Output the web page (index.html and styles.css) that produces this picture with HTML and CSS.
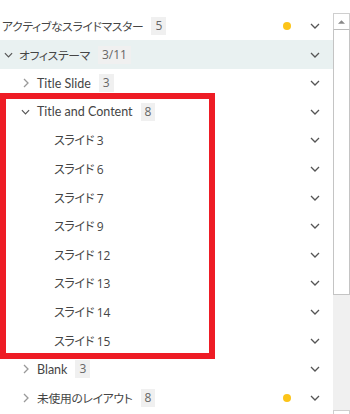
FILE: index.html
```html
<!DOCTYPE html>
<html lang="ja">
<head>
<meta charset="utf-8">
<link rel="stylesheet" href="styles.css">
</head>
<body>
<div class="pane">
  <ul class="tree">
    <li class="row lvl0">
      <span class="label ja">アクティブなスライドマスター</span><span class="badge">5</span>
      <span class="dot"></span>
      <svg class="more" viewBox="0 0 10 6"><path d="M1 1l4 4 4-4"/></svg>
    </li>
    <li class="row lvl1 selected">
      <svg class="twisty open" viewBox="0 0 10 6"><path d="M1 1l4 4 4-4"/></svg>
      <span class="label ja">オフィステーマ</span><span class="badge">3/11</span>
      <svg class="more" viewBox="0 0 10 6"><path d="M1 1l4 4 4-4"/></svg>
    </li>
    <li class="row lvl2">
      <svg class="twisty closed" viewBox="0 0 6 10"><path d="M1 1l4 4-4 4"/></svg>
      <span class="label">Title Slide</span><span class="badge">3</span>
      <svg class="more" viewBox="0 0 10 6"><path d="M1 1l4 4 4-4"/></svg>
    </li>
    <li class="row lvl2">
      <svg class="twisty open" viewBox="0 0 10 6"><path d="M1 1l4 4 4-4"/></svg>
      <span class="label">Title and Content</span><span class="badge">8</span>
      <svg class="more" viewBox="0 0 10 6"><path d="M1 1l4 4 4-4"/></svg>
    </li>
    <li class="row lvl3"><span class="label ja">スライド 3</span><svg class="more" viewBox="0 0 10 6"><path d="M1 1l4 4 4-4"/></svg></li>
    <li class="row lvl3"><span class="label ja">スライド 6</span><svg class="more" viewBox="0 0 10 6"><path d="M1 1l4 4 4-4"/></svg></li>
    <li class="row lvl3"><span class="label ja">スライド 7</span><svg class="more" viewBox="0 0 10 6"><path d="M1 1l4 4 4-4"/></svg></li>
    <li class="row lvl3"><span class="label ja">スライド 9</span><svg class="more" viewBox="0 0 10 6"><path d="M1 1l4 4 4-4"/></svg></li>
    <li class="row lvl3"><span class="label ja">スライド 12</span><svg class="more" viewBox="0 0 10 6"><path d="M1 1l4 4 4-4"/></svg></li>
    <li class="row lvl3"><span class="label ja">スライド 13</span><svg class="more" viewBox="0 0 10 6"><path d="M1 1l4 4 4-4"/></svg></li>
    <li class="row lvl3"><span class="label ja">スライド 14</span><svg class="more" viewBox="0 0 10 6"><path d="M1 1l4 4 4-4"/></svg></li>
    <li class="row lvl3"><span class="label ja">スライド 15</span><svg class="more" viewBox="0 0 10 6"><path d="M1 1l4 4 4-4"/></svg></li>
    <li class="row lvl2">
      <svg class="twisty closed" viewBox="0 0 6 10"><path d="M1 1l4 4-4 4"/></svg>
      <span class="label">Blank</span><span class="badge">3</span>
      <svg class="more" viewBox="0 0 10 6"><path d="M1 1l4 4 4-4"/></svg>
    </li>
    <li class="row lvl2">
      <svg class="twisty closed" viewBox="0 0 6 10"><path d="M1 1l4 4-4 4"/></svg>
      <span class="label ja">未使用のレイアウト</span><span class="badge">8</span>
      <span class="dot"></span>
      <svg class="more" viewBox="0 0 10 6"><path d="M1 1l4 4 4-4"/></svg>
    </li>
  </ul>
  <div class="scrollbar">
    <div class="sb-btn"><svg viewBox="0 0 8 4"><path d="M0 4L4 0 8 4z"/></svg></div>
    <div class="sb-thumb"></div>
    <div class="sb-track"></div>
    <div class="sb-btn bottom"></div>
  </div>
  <div class="highlight"></div>
</div>
</body>
</html>
```
FILE: styles.css
```css
* { box-sizing: border-box; }
html, body { margin: 0; padding: 0; background: #fff; }
body {
  width: 350px;
  height: 414px;
  overflow: hidden;
  font-family: Lato, "Noto Sans CJK JP", sans-serif;
  font-size: 12.5px;
  color: #454545;
  font-feature-settings: "palt";
}
.pane {
  position: relative;
  display: flex;
  width: 350px;
  height: 414px;
}
.tree {
  list-style: none;
  margin: 0;
  padding: 11.7px 0 0 0;
  width: 333px;
  flex: none;
}
.row {
  display: flex;
  align-items: center;
  height: 28.6px;
  padding-right: 13px;
  white-space: nowrap;
}
.row.selected { background: #e9f1f1; }
.lvl0 { padding-left: 2px; }
.lvl1 { padding-left: 4px; }
.lvl2 { padding-left: 21px; }
.lvl3 { padding-left: 54px; }
.twisty {
  flex: none;
  fill: none;
  stroke-width: 1.3;
}
.twisty.open { stroke: #555; width: 9px; height: 6px; margin-right: 7px; }
.twisty.closed { stroke: #999; width: 6px; height: 10px; margin-left: 2px; margin-right: 8px; }
.lvl1 .twisty.open { margin-right: 6px; }
.label.ja {
  font-family: "Open Sans", "Noto Sans CJK JP", sans-serif;
  font-size: 11.8px;
  letter-spacing: -0.3px;
}
.lvl3 .label.ja { font-size: 12px; }
.badge {
  margin-left: 8px;
  background: #f0f0f0;
  color: #666;
  padding: 0 4px;
  line-height: 18px;
  height: 18px;
  font-family: "Open Sans", sans-serif;
  font-size: 12px;
}
.dot {
  margin-left: auto;
  width: 8px;
  height: 8px;
  border-radius: 50%;
  background: #fcc419;
  margin-right: 19px;
}
.more {
  width: 10px;
  height: 6px;
  fill: none;
  stroke: #555;
  stroke-width: 1.3;
  margin-left: auto;
  flex: none;
}
.dot + .more { margin-left: 0; }
.scrollbar {
  flex: 1;
  display: flex;
  flex-direction: column;
  padding-top: 13px;
}
.sb-btn {
  height: 17px;
  border: 1px solid #cfcfcf;
  border-bottom-color: #bbb;
  background: #fff;
  display: flex;
  align-items: center;
  justify-content: center;
}
.sb-btn svg { width: 7px; height: 4px; fill: #888; }
.sb-thumb {
  height: 265px;
  border: 1px solid #c4c4c4;
  border-top: none;
  background: #fff;
}
.sb-track { flex: 1; background: #f0f0f0; }
.sb-btn.bottom { height: 4px; flex: none; border-bottom: none; }
.highlight {
  position: absolute;
  left: 0;
  top: 93px;
  width: 215px;
  height: 266px;
  border: 6px solid #ee1c25;
  pointer-events: none;
}
```
